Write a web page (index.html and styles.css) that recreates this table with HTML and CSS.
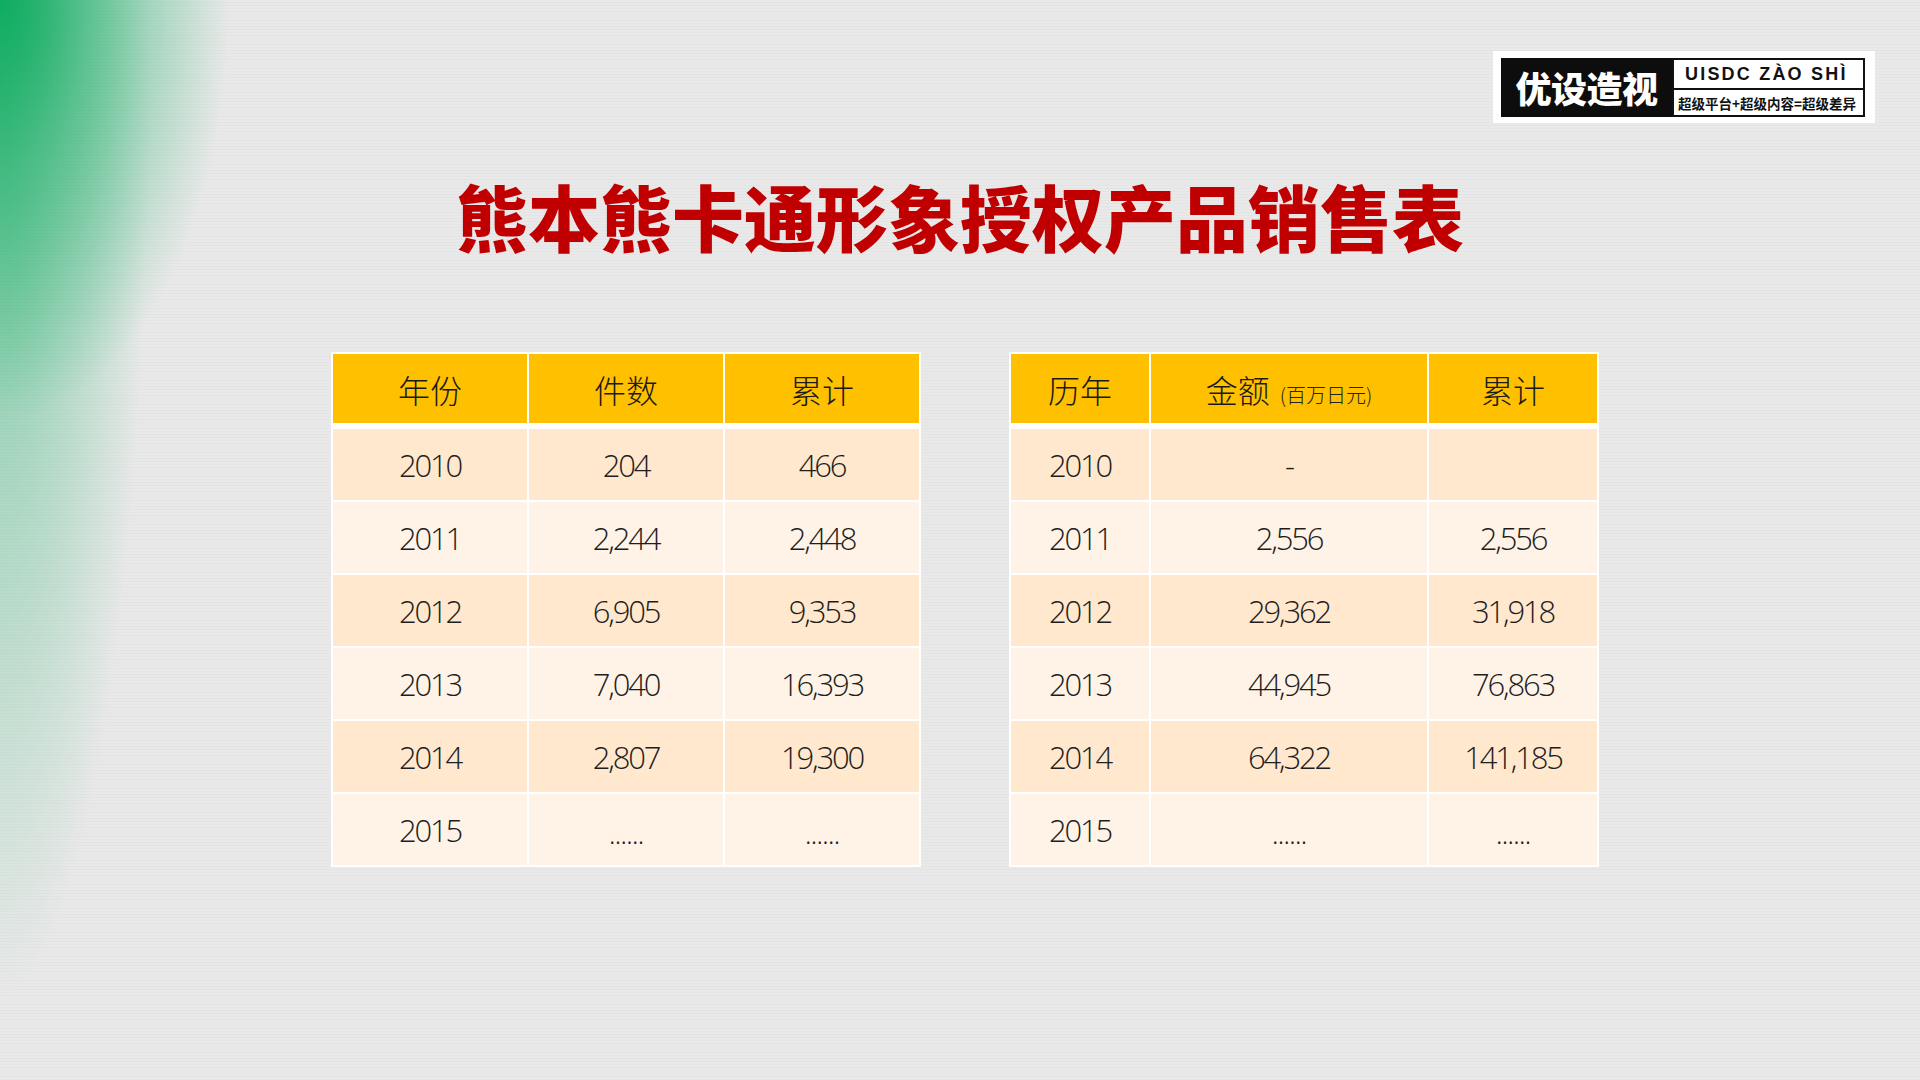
FILE: index.html
```html
<!DOCTYPE html>
<html lang="zh-CN">
<head>
<meta charset="utf-8">
<title>熊本熊卡通形象授权产品销售表</title>
<link rel="stylesheet" href="styles.css">
</head>
<body>
<div class="slide">
  <div class="logo">
    <div class="logo-mark">优设造视</div>
    <div class="logo-side">
      <div class="logo-en">UISDC ZÀO SHÌ</div>
      <div class="logo-cn">超级平台+超级内容=超级差异</div>
    </div>
  </div>

  <h1 class="title">熊本熊卡通形象授权产品销售表</h1>

  <div class="tables">
    <table class="sheet sheet-left">
      <colgroup><col class="c1"><col class="c2"><col class="c3"></colgroup>
      <thead>
        <tr><th>年份</th><th>件数</th><th>累计</th></tr>
      </thead>
      <tbody>
        <tr><td>2010</td><td>204</td><td>466</td></tr>
        <tr><td>2011</td><td>2,244</td><td>2,448</td></tr>
        <tr><td>2012</td><td>6,905</td><td>9,353</td></tr>
        <tr><td>2013</td><td>7,040</td><td>16,393</td></tr>
        <tr><td>2014</td><td>2,807</td><td>19,300</td></tr>
        <tr><td>2015</td><td class="dots">......</td><td class="dots">......</td></tr>
      </tbody>
    </table>

    <table class="sheet sheet-right">
      <colgroup><col class="r1"><col class="r2"><col class="r3"></colgroup>
      <thead>
        <tr><th>历年</th><th>金额<span class="unit">(百万日元)</span></th><th>累计</th></tr>
      </thead>
      <tbody>
        <tr><td>2010</td><td>-</td><td></td></tr>
        <tr><td>2011</td><td>2,556</td><td>2,556</td></tr>
        <tr><td>2012</td><td>29,362</td><td>31,918</td></tr>
        <tr><td>2013</td><td>44,945</td><td>76,863</td></tr>
        <tr><td>2014</td><td>64,322</td><td>141,185</td></tr>
        <tr><td>2015</td><td class="dots">......</td><td class="dots">......</td></tr>
      </tbody>
    </table>
  </div>
</div>
</body>
</html>
```

FILE: styles.css
```css
html, body {
  margin: 0;
  padding: 0;
}

body {
  width: 1920px;
  height: 1080px;
  overflow: hidden;
  font-family: "Noto Sans CJK SC", "Noto Sans", sans-serif;
}

.slide {
  position: relative;
  width: 1920px;
  height: 1080px;
  background:
    radial-gradient(ellipse 230px 420px at 0 0, rgba(14, 172, 96, 1) 0%, rgba(14, 172, 96, 0.55) 38%, rgba(14, 172, 96, 0) 100%),
    radial-gradient(ellipse 150px 920px at 0 80px, rgba(14, 172, 96, 0.55) 0%, rgba(14, 172, 96, 0.28) 45%, rgba(14, 172, 96, 0) 100%),
    repeating-linear-gradient(to bottom, #e9e9e9 0 2px, #e4e4e4 2px 3px);
  overflow: hidden;
}

/* Logo */
.logo {
  position: absolute;
  top: 51px;
  right: 45px;
  width: 364px;
  height: 59px;
  padding: 7px 10px 6px 8px;
  background: #ffffff;
  display: flex;
}

.logo-mark {
  width: 171px;
  background: #0d0d0d;
  color: #ffffff;
  font-weight: 900;
  font-size: 36px;
  line-height: 59px;
  text-align: center;
  letter-spacing: -0.5px;
}

.logo-side {
  flex: 1;
  border: 2px solid #111;
  display: flex;
  flex-direction: column;
  box-sizing: border-box;
}

.logo-en {
  height: 28px;
  border-bottom: 2px solid #111;
  font-family: "Liberation Sans", "DejaVu Sans", sans-serif;
  font-weight: 700;
  font-size: 18px;
  letter-spacing: 2.2px;
  line-height: 29px;
  padding-left: 11px;
  color: #111;
}

.logo-cn {
  flex: 1;
  font-weight: 700;
  font-size: 13.5px;
  line-height: 26px;
  padding-left: 4px;
  color: #111;
  white-space: nowrap;
}

/* Title */
.title {
  margin: 0;
  padding-top: 179px;
  text-align: center;
  font-size: 72px;
  line-height: 72px;
  font-weight: 900;
  color: #c00000;
}

/* Tables */
.tables {
  display: flex;
  justify-content: center;
  gap: 88px;
  margin-top: 101px;
  padding-left: 10px;
}

.sheet {
  border-collapse: separate;
  border-spacing: 2px;
  background: #ffffff;
  table-layout: fixed;
  width: 590px;
}

.c1, .c2, .c3 { width: 194px; }
.r1 { width: 138px; }
.r2 { width: 276px; }
.r3 { width: 168px; }

.sheet th {
  height: 69px;
  padding: 0;
  background: #ffc000;
  border-bottom: 4px solid #ffffff;
  font-weight: 300;
  font-size: 32px;
  color: #1a1a1a;
  text-align: center;
  vertical-align: middle;
}

.unit {
  font-size: 20px;
  margin-left: 10px;
  color: #222;
}

.sheet td {
  height: 71px;
  padding: 0;
  text-align: center;
  vertical-align: middle;
  font-family: "Open Sans", "Noto Sans CJK SC", sans-serif;
  font-weight: 300;
  font-size: 31px;
  letter-spacing: -2.2px;
  color: #1e1e1e;
}

.sheet tbody tr:nth-child(odd) td { background: #ffe8cd; }
.sheet tbody tr:nth-child(even) td { background: #fff3e7; }

.sheet td.dots {
  height: 65px;
  padding-top: 6px;
  font-size: 29px;
  letter-spacing: -1.2px;
}
```
